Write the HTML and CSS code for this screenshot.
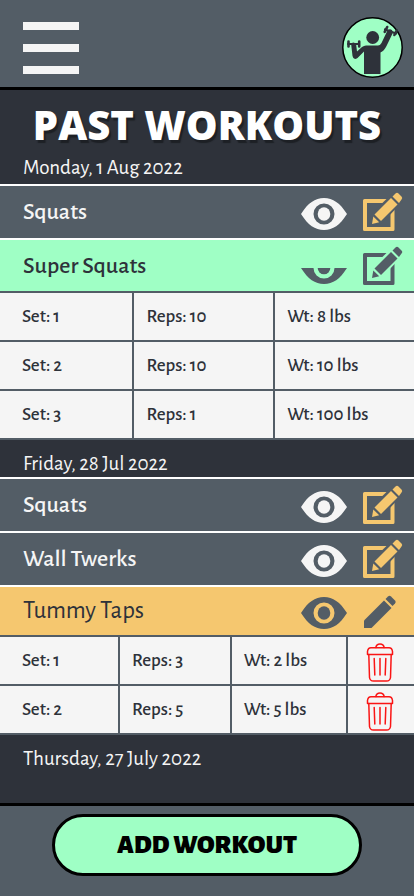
FILE: index.html
```html
<!DOCTYPE html>
<html lang="en">
<head>
<meta charset="utf-8">
<meta name="viewport" content="width=device-width, initial-scale=1">
<title>Past Workouts</title>
<link rel="stylesheet" href="styles.css">
</head>
<body>
<svg class="sprite" aria-hidden="true">
  <symbol id="eye" viewBox="0 0 46 36">
    <path fill="currentColor" fill-rule="evenodd" d="M0 20C7 9 14 4 23 4s16 5 23 16c-7 11-14 16-23 16S7 31 0 20ZM23 9.500a10.500 10.500 0 1 0 0 21 10.500 10.500 0 0 0 0-21Z"/>
    <ellipse fill="currentColor" cx="23" cy="20" rx="6.300" ry="6.800"/>
  </symbol>
  <symbol id="eye-half" viewBox="0 0 46 36">
    <path fill="currentColor" d="M0 20H12.500a10.500 10.500 0 0 0 21 0H46c-7 11-14 16-23 16S7 31 0 20Z"/>
    <path fill="currentColor" d="M16.700 20h12.600a6.300 6.300 0 0 1-12.600 0Z"/>
  </symbol>
  <symbol id="edit" viewBox="0 0 40 40">
    <path fill="currentColor" fill-rule="evenodd" d="M1.500 7H30a1.500 1.500 0 0 1 1.500 1.500V37.500A1.500 1.500 0 0 1 30 39H1.500A1.500 1.500 0 0 1 0 37.500V8.500A1.500 1.500 0 0 1 1.500 7ZM4 11V35H27.500V11Z"/>
    <path class="cut" d="M9 32 10 23 32.500 1 39 7.500 17 30.500Z"/>
    <g fill="currentColor">
      <path d="M11.500 22.500 28 6 34.500 12.500 18 29Z"/>
      <path d="M10.300 24.500 16.200 30.300 9 32Z"/>
      <path d="M29.500 4.500 32.500 1.500Q34 0 35.500 1.500L38.500 4.500Q40 6 38.500 7.500L36 11Z"/>
    </g>
  </symbol>
  <symbol id="pencil" viewBox="0 0 40 40">
    <g fill="currentColor">
      <path d="M1 37V29.500L21 9.500 28.500 17 8.500 37Z"/>
      <path d="M22.500 8 25 5.500Q26.500 4 28 5.500L32 9.500Q33.500 11 32 12.500L29.500 15Z"/>
    </g>
  </symbol>
  <symbol id="bin" viewBox="0 0 28 40">
    <g fill="none" stroke="currentColor" stroke-width="1.500" stroke-linecap="round" stroke-linejoin="round">
      <path d="M9.800 5.500Q10.500 2 14 2T18.200 5.500"/>
      <path d="M1.500 12.500V9.500Q2 5.800 5 5.800H23Q26 5.800 26.500 9.500V12.500Z"/>
      <path d="M2.800 12.500 3.500 35.500Q4 39 7.500 39H20.500Q24 39 24.500 35.500L25.200 12.500"/>
      <path d="M8.200 16.500 8.800 33M14 16.500V33M19.800 16.500 19.200 33"/>
    </g>
  </symbol>
</svg>

<header class="topbar">
  <button class="menu" type="button" aria-label="Menu"><span></span><span></span><span></span></button>
  <a class="avatar" href="#profile" aria-label="Profile">
    <svg viewBox="0 0 61 61">
      <circle cx="30.500" cy="30.500" r="29.700" fill="#9fffc5" stroke="#000" stroke-width="1.500"/>
      <g fill="#2e323a">
        <circle cx="30.700" cy="20.500" r="6.400"/>
        <path d="M22 57V34.500L15.500 41Q11.500 43.500 10.500 39L9.300 28.500Q9 25.500 11.500 25.500T14.200 28L15 34.500 20 30Q22 28.500 24 28.500H36Q38 28.500 39.500 26L45 14.500Q46.500 11.500 49 12.500T50.300 17L44.500 29Q42 34 38.500 35.500V57Z"/>
      </g>
      <g stroke="#2e323a" stroke-linecap="round">
        <path stroke-width="2.200" d="M6 27H17M43 12.500 54 16.500"/>
        <path stroke-width="2.600" d="M6.500 24.500V29.500M17.200 24.500V29.500M45.200 10 42.700 14.800M54.700 13.500 52.400 18"/>
      </g>
    </svg>
  </a>
</header>

<main class="content">
  <h1 class="title">PAST WORKOUTS</h1>

  <section class="day">
    <h2 class="date">Monday, 1 Aug 2022</h2>
    <div class="exercise">
      <h3 class="name">Squats</h3>
      <button class="icon-button" type="button" aria-label="Show sets"><svg class="eye"><use href="#eye"/></svg></button>
      <button class="icon-button accent" type="button" aria-label="Edit"><svg class="edit"><use href="#edit"/></svg></button>
    </div>
    <div class="exercise open">
      <h3 class="name">Super Squats</h3>
      <button class="icon-button" type="button" aria-label="Hide sets"><svg class="eye"><use href="#eye-half"/></svg></button>
      <button class="icon-button accent" type="button" aria-label="Edit"><svg class="edit"><use href="#edit"/></svg></button>
    </div>
    <table class="sets">
      <colgroup><col class="set-col"><col class="reps-col"><col></colgroup>
      <tbody>
        <tr><td>Set: 1</td><td>Reps: 10</td><td>Wt: 8 lbs</td></tr>
        <tr><td>Set: 2</td><td>Reps: 10</td><td>Wt: 10 lbs</td></tr>
        <tr><td>Set: 3</td><td>Reps: 1</td><td>Wt: 100 lbs</td></tr>
      </tbody>
    </table>
  </section>

  <section class="day">
    <h2 class="date">Friday, 28 Jul 2022</h2>
    <div class="exercise">
      <h3 class="name">Squats</h3>
      <button class="icon-button" type="button" aria-label="Show sets"><svg class="eye"><use href="#eye"/></svg></button>
      <button class="icon-button accent" type="button" aria-label="Edit"><svg class="edit"><use href="#edit"/></svg></button>
    </div>
    <div class="exercise">
      <h3 class="name">Wall Twerks</h3>
      <button class="icon-button" type="button" aria-label="Show sets"><svg class="eye"><use href="#eye"/></svg></button>
      <button class="icon-button accent" type="button" aria-label="Edit"><svg class="edit"><use href="#edit"/></svg></button>
    </div>
    <div class="exercise editing">
      <h3 class="name">Tummy Taps</h3>
      <button class="icon-button" type="button" aria-label="Hide sets"><svg class="eye"><use href="#eye"/></svg></button>
      <button class="icon-button accent" type="button" aria-label="Finish editing"><svg class="edit"><use href="#pencil"/></svg></button>
    </div>
    <table class="sets editable">
      <colgroup><col class="set-col"><col class="reps-col"><col class="weight-col"><col></colgroup>
      <tbody>
        <tr><td>Set: 1</td><td>Reps: 3</td><td>Wt: 2 lbs</td><td class="action"><button class="icon-button delete" type="button" aria-label="Delete set 1"><svg class="bin"><use href="#bin"/></svg></button></td></tr>
        <tr><td>Set: 2</td><td>Reps: 5</td><td>Wt: 5 lbs</td><td class="action"><button class="icon-button delete" type="button" aria-label="Delete set 2"><svg class="bin"><use href="#bin"/></svg></button></td></tr>
      </tbody>
    </table>
  </section>

  <section class="day">
    <h2 class="date">Thursday, 27 July 2022</h2>
  </section>
</main>

<footer class="bottombar">
  <button class="add" type="button">ADD WORKOUT</button>
</footer>
</body>
</html>
```
FILE: styles.css
```css
:root {
  --slate: #535d66;
  --ink: #2e323a;
  --paper: #f5f5f5;
  --mint: #9fffc5;
  --amber: #f5c76f;
}

* {
  box-sizing: border-box;
}

body {
  margin: 0;
  min-height: 100vh;
  display: flex;
  flex-direction: column;
  background: var(--ink);
  color: var(--paper);
  font-family: "Alegreya Sans", Lato, "Open Sans", sans-serif;
}

h1,
h2,
h3 {
  margin: 0;
}

button {
  padding: 0;
  border: 0;
  background: none;
  color: inherit;
  font: inherit;
  cursor: pointer;
}

svg {
  display: block;
}

.sprite {
  position: absolute;
  width: 0;
  height: 0;
}

.topbar {
  display: flex;
  align-items: center;
  justify-content: space-between;
  padding: 17px 11px 9px 23px;
  background: var(--slate);
  border-bottom: 3px solid #000;
}

.menu {
  display: grid;
  gap: 14px;
  width: 56px;
}

.menu span {
  height: 8px;
  background: var(--paper);
}

.avatar svg {
  width: 61px;
  height: 61px;
}

.content {
  flex: 1;
}

.title {
  padding-top: 7px;
  font: 800 40px/56px "Open Sans", sans-serif;
  text-align: center;
  color: #fff;
  text-shadow: 2px 3px 1px #1d2025;
}

.date {
  height: 37px;
  padding: 10px 23px 0;
  font-size: 21px;
  line-height: 28px;
  font-weight: 400;
}

.title + .day .date {
  height: 31px;
  padding-top: 1px;
}

.exercise {
  --row: var(--slate);
  display: flex;
  align-items: center;
  gap: 16px;
  height: 54px;
  padding: 0 11px 0 23px;
  border-top: 2px solid #fff;
  background: var(--row);
}

.exercise.open {
  --row: var(--mint);
  height: 53px;
  color: var(--ink);
}

.exercise.editing {
  --row: var(--amber);
  height: 50px;
  color: var(--ink);
}

.name {
  flex: 1;
  font-size: 24px;
  line-height: 28px;
  font-weight: 500;
}

.editing .name {
  font-size: 25px;
  font-weight: 400;
}

.accent {
  color: var(--amber);
}

.open .icon-button,
.editing .icon-button {
  color: var(--slate);
}

.eye {
  width: 46px;
  height: 36px;
}

.edit {
  width: 40px;
  height: 40px;
}

.cut {
  fill: var(--row);
  stroke: var(--row);
  stroke-width: 4px;
}

.sets {
  width: 100%;
  table-layout: fixed;
  border-spacing: 0;
  border-bottom: 2px solid var(--slate);
  background: var(--paper);
  color: var(--ink);
}

.set-col {
  width: 32%;
}

.reps-col {
  width: 34%;
}

.editable .set-col {
  width: 28.5%;
}

.editable .reps-col {
  width: 27%;
}

.weight-col {
  width: 28%;
}

.sets td {
  height: 49px;
  padding: 0 12px;
  border-top: 2px solid var(--slate);
  border-left: 2px solid var(--slate);
  font-size: 19px;
  line-height: 24px;
  font-weight: 500;
}

.sets td:first-child {
  padding-left: 22px;
  border-left: 0;
}

.sets .action {
  padding: 2px 2px 0 0;
}

.delete {
  display: block;
  margin: 0 auto;
  color: #fa1515;
}

.bin {
  width: 28px;
  height: 40px;
}

.bottombar {
  padding: 8px 52px 20px;
  border-top: 3px solid #000;
  background: var(--slate);
}

.add {
  display: block;
  width: 100%;
  height: 62px;
  border: 3px solid #000;
  border-radius: 31px;
  background: var(--mint);
  color: #000;
  font-size: 27px;
  font-weight: 900;
}
```
